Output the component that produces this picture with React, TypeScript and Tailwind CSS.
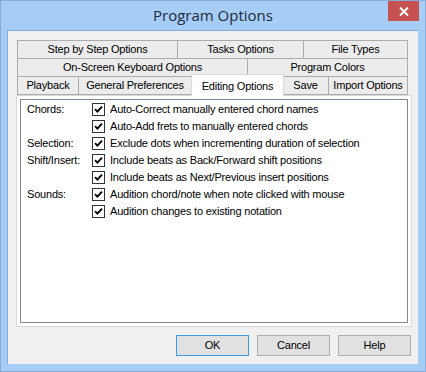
import React from "react";

const rows: { label: string; text: string }[] = [
  { label: "Chords:", text: "Auto-Correct manually entered chord names" },
  { label: "", text: "Auto-Add frets to manually entered chords" },
  { label: "Selection:", text: "Exclude dots when incrementing duration of selection" },
  { label: "Shift/Insert:", text: "Include beats as Back/Forward shift positions" },
  { label: "", text: "Include beats as Next/Previous insert positions" },
  { label: "Sounds:", text: "Audition chord/note when note clicked with mouse" },
  { label: "", text: "Audition changes to existing notation" },
];

const Tab = ({ label, w, first }: { label: string; w: string; first?: boolean }) => (
  <div
    className={`${w} ${first ? "" : "-ml-px"} h-[19px] flex items-center justify-center border border-[#acacac] bg-[#ececec] text-[11px] text-black whitespace-nowrap`}
  >
    {label}
  </div>
);

const Check = () => (
  <div className="w-[13px] h-[13px] border border-[#333] bg-white flex items-center justify-center shrink-0">
    <svg width="9" height="9" viewBox="0 0 9 9">
      <path d="M1 4.2 L3.4 6.6 L8 1.6" stroke="#000" strokeWidth="1.9" fill="none" />
    </svg>
  </div>
);

const Btn = ({ label, def }: { label: string; def?: boolean }) => (
  <button
    className={`w-[73px] h-[21px] bg-[#e1e1e1] border ${def ? "border-[#3c9be6]" : "border-[#adadad]"} text-[11px] text-black`}
  >
    {label}
  </button>
);

export default function App() {
  return (
    <div
      className="w-[426px] h-[372px] bg-[#a6cdf6] border border-[#88acd9] flex flex-col tracking-[-0.2px]"
      style={{ fontFamily: '"Liberation Sans", Arial, sans-serif' }}
    >
      <div className="h-[29px] flex items-start relative shrink-0">
        <div className="flex-1 h-[28px] flex items-center justify-center text-[15px] text-[#1f2a3a] tracking-normal" style={{ fontFamily: '"Open Sans", "Noto Sans", sans-serif' }}>
          Program Options
        </div>
        <div className="absolute right-[6px] top-0 w-[31px] h-[20px] bg-[#c75050] flex items-center justify-center">
          <svg width="10" height="9" viewBox="0 0 10 9">
            <path d="M1 0.5 L9 8.5 M9 0.5 L1 8.5" stroke="#fff" strokeWidth="2" />
          </svg>
        </div>
      </div>
      <div className="ml-[6px] mr-[7px] h-[334px] bg-[#f0f0f0] border-t border-l border-[#88acd9] flex flex-col">
        <div className="pl-[8px] pt-[9px]">
          <div className="ml-px w-[391px] flex flex-col">
            <div className="flex">
              <Tab label="Step by Step Options" w="w-[161px]" first />
              <Tab label="Tasks Options" w="w-[127px]" />
              <Tab label="File Types" w="w-[105px]" />
            </div>
            <div className="flex -mt-px">
              <Tab label="On-Screen Keyboard Options" w="w-[231px]" first />
              <Tab label="Program Colors" w="w-[161px]" />
            </div>
            <div className="flex -mt-px items-end">
              <Tab label="Playback" w="w-[62px]" first />
              <Tab label="General Preferences" w="w-[114px]" />
              <div className="-ml-px -mr-[1px] w-[93px] h-[22px] -mb-px -mt-[2px] relative z-10 flex items-start pt-[3px] justify-center border border-b-0 border-[#d9d9d9] bg-white text-[11px] text-black whitespace-nowrap">
                Editing Options
              </div>
              <Tab label="Save" w="w-[47px]" />
              <Tab label="Import Options" w="w-[80px]" />
            </div>
          </div>
          <div className="w-[396px] h-[232px] bg-white border border-[#d9d9d9] p-[3px]">
            <div className="h-full border border-[#828790] bg-white pl-[6px] pt-px flex flex-col">
              {rows.map((r, i) => (
                <div key={i} className="h-[17px] flex items-center text-[11px] text-black">
                  <div className="w-[65px] shrink-0 whitespace-nowrap">{r.label}</div>
                  <Check />
                  <div className="ml-[5px] whitespace-nowrap">{r.text}</div>
                </div>
              ))}
            </div>
          </div>
        </div>
        <div className="flex justify-end gap-[8px] pr-[7px] pt-[8px]">
          <Btn label="OK" def />
          <Btn label="Cancel" />
          <Btn label="Help" />
        </div>
      </div>
    </div>
  );
}
